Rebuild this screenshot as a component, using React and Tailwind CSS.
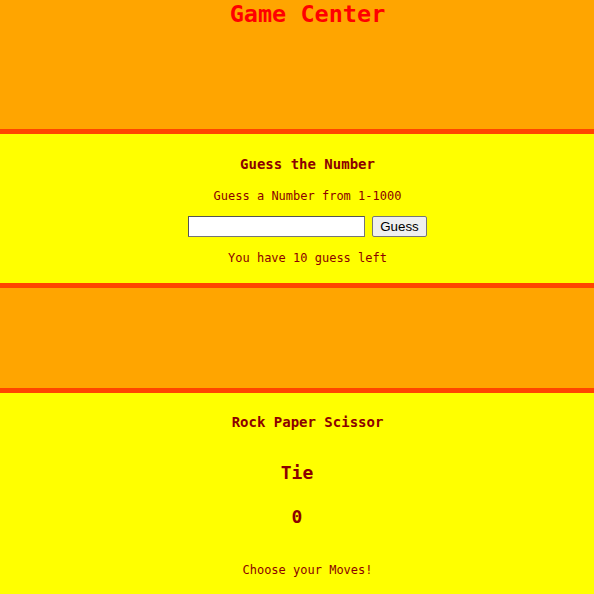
export default function App() {
  const mono = "font-['DejaVu_Sans_Mono','Liberation_Mono',monospace]";
  return (
    <div className={`w-[594px] h-[594px] overflow-hidden bg-[#ffff00] ${mono}`}>
      <header className="h-[134px] bg-[#ffa500] border-b-[5px] border-[#ff4500] pl-[21px] flex justify-center">
        <h1 className="text-[23.5px] leading-[28px] font-bold text-[#ff0000] m-0">Game Center</h1>
      </header>
      <section className="h-[154px] bg-[#ffff00] border-b-[5px] border-[#ff4500] pl-[21px] flex flex-col items-center text-[#8b0000]">
        <h3 className="mt-[21px] text-[14px] leading-[18px] font-bold">Guess the Number</h3>
        <p className="mt-[15px] text-[12px] leading-[16px]">Guess a Number from 1-1000</p>
        <div className="mt-[12px] flex items-center gap-[7px]">
          <input type="text" className="w-[177px] h-[21px] bg-white border border-[#767676] border-t-[#555] border-l-[#555] px-1 text-[13px] font-['Liberation_Sans',sans-serif]" />
          <button className="w-[55px] h-[21px] bg-[#efefef] border border-[#767676] rounded-[2px] text-[13.33px] leading-[18px] text-black font-['Liberation_Sans',sans-serif]">Guess</button>
        </div>
        <p className="mt-[13px] text-[12px] leading-[16px]">You have 10 guess left</p>
      </section>
      <section className="h-[105px] bg-[#ffa500] border-b-[5px] border-[#ff4500]" />
      <section className="bg-[#ffff00] flex flex-col items-center text-[#8b0000]">
        <h3 className="mt-[20px] pl-[21px] text-[14px] leading-[18px] font-bold">Rock Paper Scissor</h3>
        <h2 className="mt-[30px] text-[18px] leading-[24px] font-bold">Tie</h2>
        <h2 className="mt-[20px] text-[18px] leading-[24px] font-bold">0</h2>
        <p className="mt-[33px] pl-[21px] text-[12px] leading-[16px]">Choose your Moves!</p>
      </section>
    </div>
  );
}
